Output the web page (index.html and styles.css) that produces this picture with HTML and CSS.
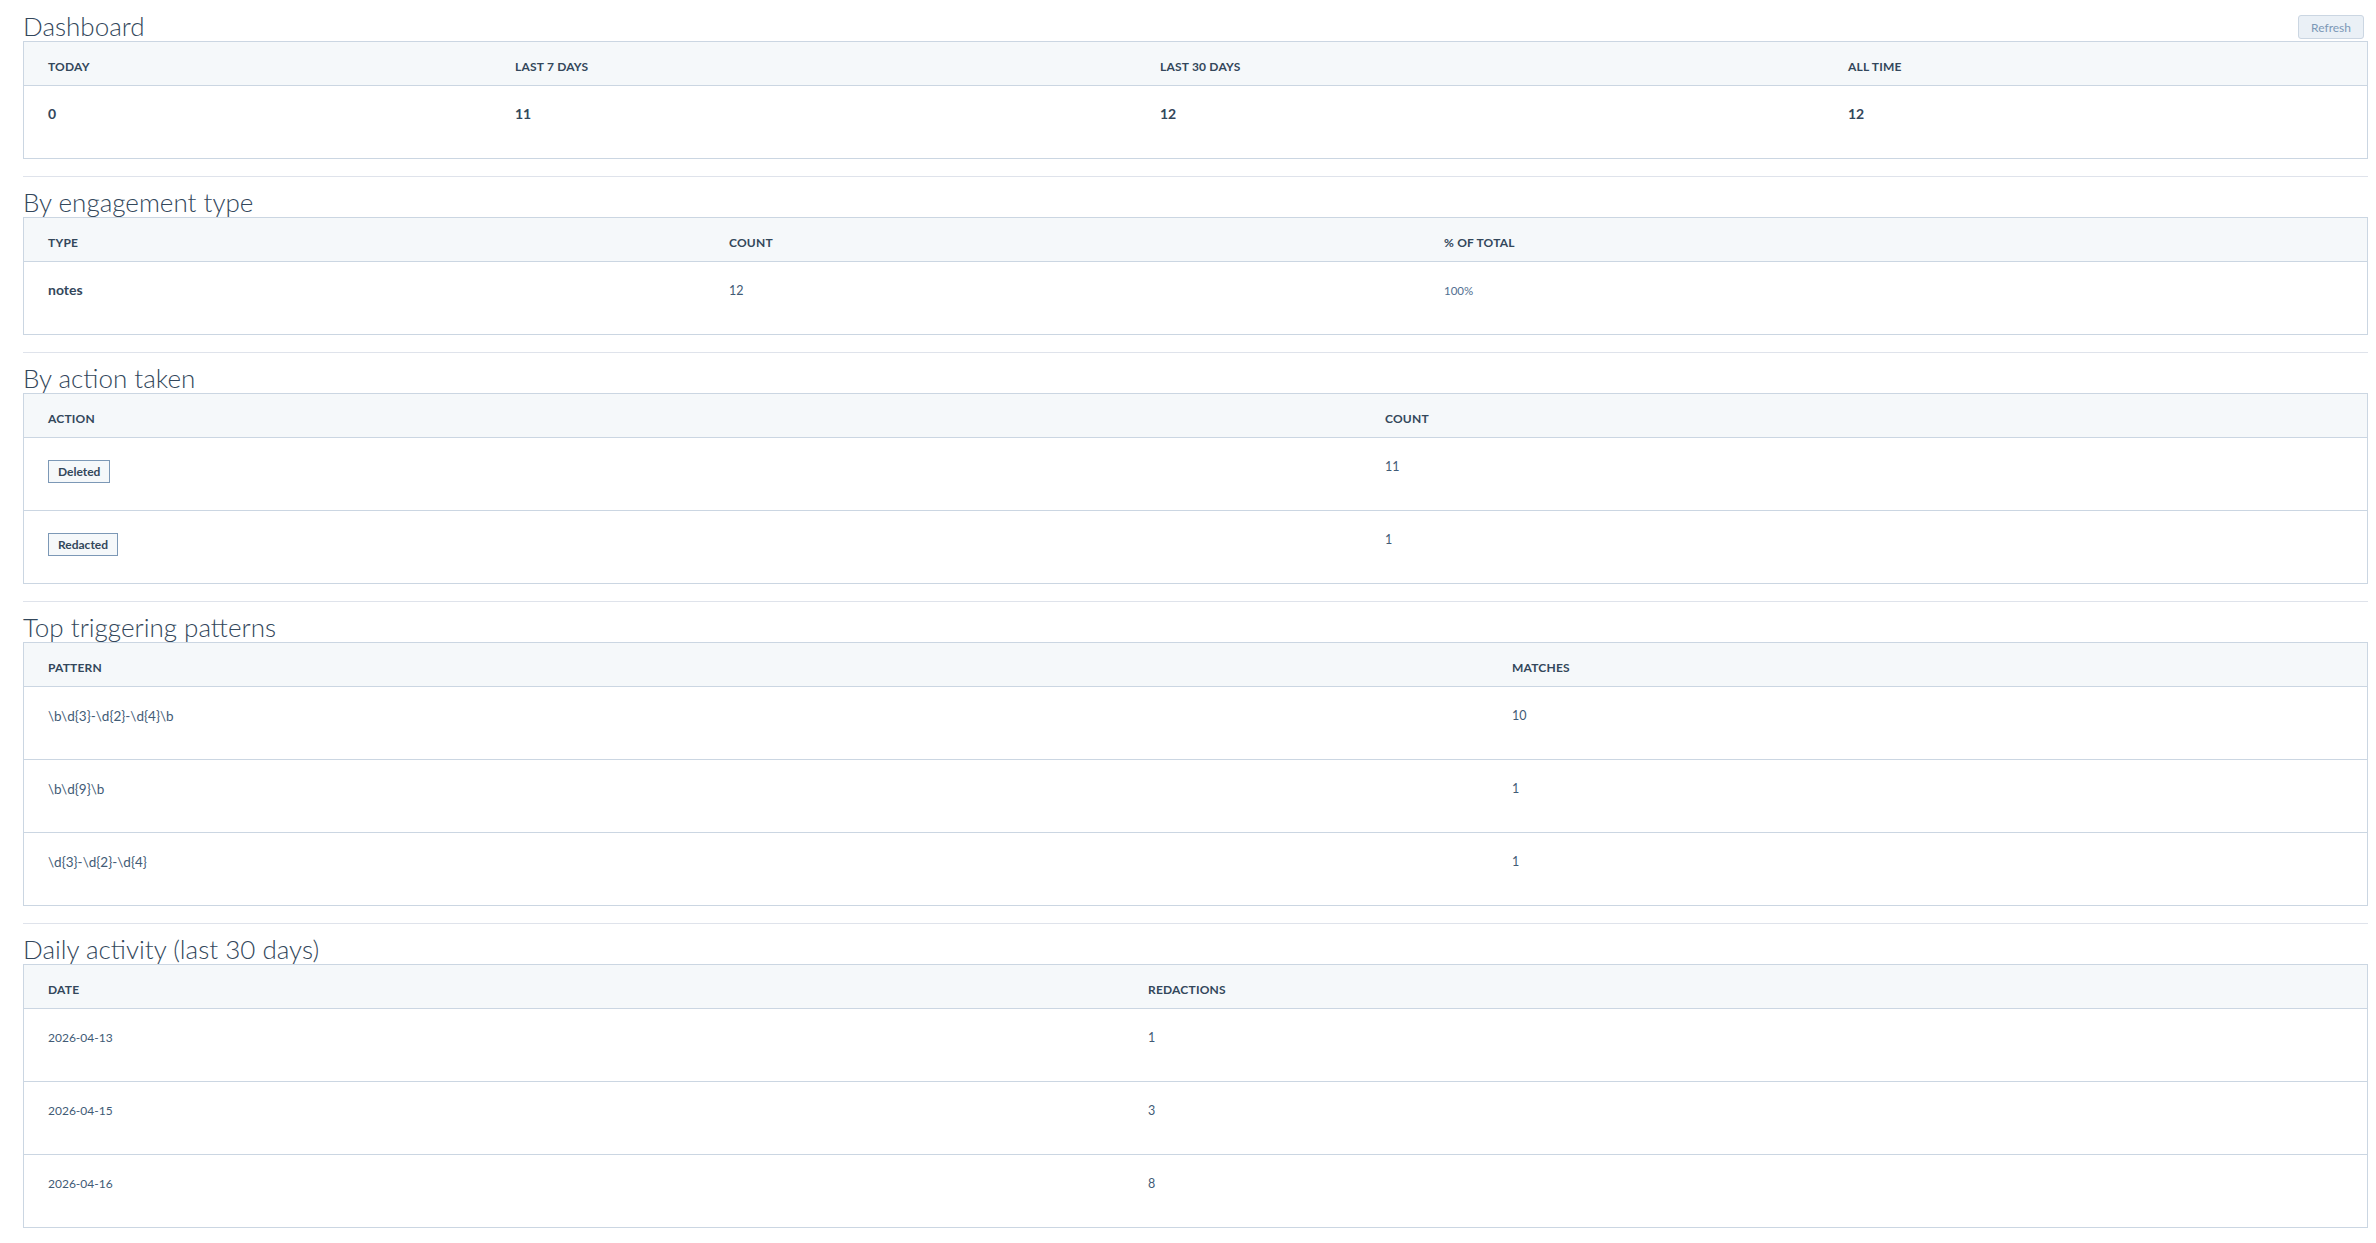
FILE: index.html
```html
<!DOCTYPE html>
<html lang="en">
<head>
<meta charset="utf-8">
<title>Dashboard</title>
<link rel="stylesheet" href="styles.css">
</head>
<body>
<main class="page">
  <section class="section">
    <div class="section-head">
      <h2 class="section-title">Dashboard</h2>
      <button class="btn" type="button">Refresh</button>
    </div>
    <div class="card">
      <div class="grid cols-dash head">
        <div class="th">Today</div>
        <div class="th">Last 7 days</div>
        <div class="th">Last 30 days</div>
        <div class="th">All time</div>
      </div>
      <div class="grid cols-dash row">
        <div class="td strong">0</div>
        <div class="td strong">11</div>
        <div class="td strong">12</div>
        <div class="td strong">12</div>
      </div>
    </div>
  </section>

  <hr class="divider">

  <section class="section">
    <div class="section-head">
      <h2 class="section-title">By engagement type</h2>
    </div>
    <div class="card">
      <div class="grid cols-type head">
        <div class="th">Type</div>
        <div class="th">Count</div>
        <div class="th">% of total</div>
      </div>
      <div class="grid cols-type row">
        <div class="td strong">notes</div>
        <div class="td">12</div>
        <div class="td muted small">100%</div>
      </div>
    </div>
  </section>

  <hr class="divider">

  <section class="section">
    <div class="section-head">
      <h2 class="section-title">By action taken</h2>
    </div>
    <div class="card">
      <div class="grid cols-action head">
        <div class="th">Action</div>
        <div class="th">Count</div>
      </div>
      <div class="grid cols-action row">
        <div class="td"><span class="badge">Deleted</span></div>
        <div class="td">11</div>
      </div>
      <div class="grid cols-action row">
        <div class="td"><span class="badge">Redacted</span></div>
        <div class="td">1</div>
      </div>
    </div>
  </section>

  <hr class="divider">

  <section class="section">
    <div class="section-head">
      <h2 class="section-title">Top triggering patterns</h2>
    </div>
    <div class="card">
      <div class="grid cols-pattern head">
        <div class="th">Pattern</div>
        <div class="th">Matches</div>
      </div>
      <div class="grid cols-pattern row">
        <div class="td pattern">\b\d{3}-\d{2}-\d{4}\b</div>
        <div class="td">10</div>
      </div>
      <div class="grid cols-pattern row">
        <div class="td pattern">\b\d{9}\b</div>
        <div class="td">1</div>
      </div>
      <div class="grid cols-pattern row">
        <div class="td pattern">\d{3}-\d{2}-\d{4}</div>
        <div class="td">1</div>
      </div>
    </div>
  </section>

  <hr class="divider">

  <section class="section">
    <div class="section-head">
      <h2 class="section-title">Daily activity (last 30 days)</h2>
    </div>
    <div class="card">
      <div class="grid cols-daily head">
        <div class="th">Date</div>
        <div class="th">Redactions</div>
      </div>
      <div class="grid cols-daily row">
        <div class="td date">2026-04-13</div>
        <div class="td">1</div>
      </div>
      <div class="grid cols-daily row">
        <div class="td date">2026-04-15</div>
        <div class="td">3</div>
      </div>
      <div class="grid cols-daily row">
        <div class="td date">2026-04-16</div>
        <div class="td">8</div>
      </div>
    </div>
  </section>
</main>
</body>
</html>
```

FILE: styles.css
```css
html, body {
  background: #ffffff;
}

body {
  margin: 0;
  padding: 11px 8px 0 23px;
  font-family: Lato, "Open Sans", "Liberation Sans", sans-serif;
  color: #33475b;
}

.section-head {
  display: flex;
  justify-content: space-between;
  align-items: flex-start;
}

.section-title {
  margin: 0;
  height: 30px;
  font-size: 26px;
  line-height: 30px;
  font-weight: 300;
  color: #33475b;
  white-space: nowrap;
}

.btn {
  margin: 4px 4px 0 0;
  height: 24px;
  padding: 0 12px;
  font-family: Lato, "Open Sans", sans-serif;
  font-size: 12px;
  color: #7c98b6;
  background: #eaf0f6;
  border: 1px solid #cbd6e2;
  border-radius: 3px;
}

.card {
  border: 1px solid #cbd6e2;
  background: #ffffff;
}

.grid {
  display: grid;
}

.cols-dash { grid-template-columns: 467px 645px 688px 1fr; }
.cols-type { grid-template-columns: 681px 715px 1fr; }
.cols-action { grid-template-columns: 1337px 1fr; }
.cols-pattern { grid-template-columns: 1464px 1fr; }
.cols-daily { grid-template-columns: 1100px 1fr; }

.head {
  height: 43px;
  background: #f5f8fa;
  border-bottom: 1px solid #cbd6e2;
}

.th {
  padding: 17px 24px 0;
  font-size: 12px;
  line-height: 15px;
  font-weight: 700;
  text-transform: uppercase;
  letter-spacing: 0.2px;
  color: #33475b;
  white-space: nowrap;
}

.row {
  height: 72px;
}

.row + .row {
  border-top: 1px solid #cbd6e2;
}

.td {
  padding: 21px 24px 0;
  font-size: 12.5px;
  line-height: 16px;
  color: #425b76;
  white-space: nowrap;
}

.td.strong {
  padding-top: 20px;
  font-size: 14px;
  font-weight: 700;
  color: #33475b;
}

.td.pattern {
  font-size: 13.5px;
  color: #425b76;
}

.td.date {
  font-size: 12px;
}

.td.muted {
  color: #516f90;
}

.td.small {
  font-size: 11.5px;
}

.badge {
  display: inline-block;
  margin-top: 1px;
  padding: 3px 9px;
  font-size: 12px;
  line-height: 15px;
  font-weight: 700;
  color: #33475b;
  background: #f5f8fa;
  border: 1px solid #7c98b6;
}

.divider {
  height: 0;
  margin: 17px 0 10px;
  border: 0;
  border-top: 1px solid #dfe3eb;
}
```
